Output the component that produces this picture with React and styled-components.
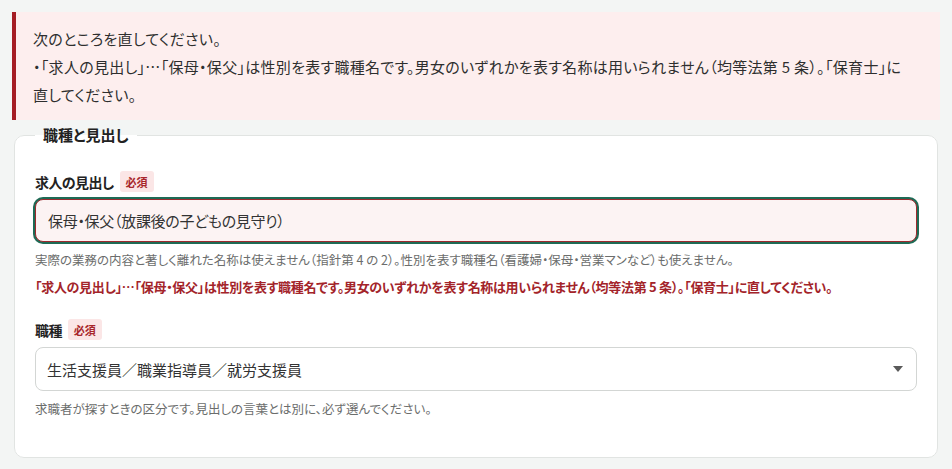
import { createGlobalStyle } from 'styled-components';
import styled from 'styled-components';

const GlobalStyle = createGlobalStyle`
  body {
    margin: 0;
    background: #f3f5f4;
    font-family: 'Noto Sans CJK JP', 'Noto Sans', sans-serif;
    font-feature-settings: 'palt';
    color: #2b2b2b;
  }
`;

const App = () => {
  return (
    <>
      <GlobalStyle />
      <Page>
        <Alert role='alert'>
          <AlertLine>次のところを直してください。</AlertLine>
          <AlertLine>
            ・「求人の見出し」…「保母・保父」は性別を表す職種名です。男女のいずれかを表す名称は用いられません（均等法第 5 条）。「保育士」に直してください。
          </AlertLine>
        </Alert>

        <Card>
          <Legend>職種と見出し</Legend>

          <Field>
            <LabelRow>
              <Label htmlFor='headline'>求人の見出し</Label>
              <Required>必須</Required>
            </LabelRow>
            <TextInput
              id='headline'
              defaultValue='保母・保父（放課後の子どもの見守り）'
              $invalid
            />
            <Hint>
              実際の業務の内容と著しく離れた名称は使えません（指針第 4 の 2）。性別を表す職種名（看護婦・保母・営業マンなど）も使えません。
            </Hint>
            <ErrorText>
              「求人の見出し」…「保母・保父」は性別を表す職種名です。男女のいずれかを表す名称は用いられません（均等法第 5 条）。「保育士」に直してください。
            </ErrorText>
          </Field>

          <Field>
            <LabelRow>
              <Label htmlFor='jobType'>職種</Label>
              <Required>必須</Required>
            </LabelRow>
            <SelectWrap>
              <Select id='jobType' defaultValue='life'>
                <option value='life'>生活支援員／職業指導員／就労支援員</option>
              </Select>
              <Caret width='10' height='6' viewBox='0 0 10 6'>
                <path d='M0 0h10L5 6z' fill='#5a5a5a' />
              </Caret>
            </SelectWrap>
            <Hint>求職者が探すときの区分です。見出しの言葉とは別に、必ず選んでください。</Hint>
          </Field>
        </Card>
      </Page>
    </>
  );
};

export default App;

const Page = styled.main`
  display: flex;
  flex-direction: column;
  padding: 12px 12px 0;
`;

const Alert = styled.div`
  padding: 13px 30px 11px 17px;
  border-left: 4px solid #a51d24;
  background: #fdeeee;
`;

const AlertLine = styled.p`
  margin: 0;
  font-size: 15px;
  line-height: 28px;
  letter-spacing: 0.3px;
  color: #2e2e2e;
`;

const Card = styled.fieldset`
  margin: 4px 2px 0;
  padding: 25px 20px 39px;
  min-width: 0;

  border: 1px solid #e1e4e2;
  border-radius: 10px;
  background: #fff;
`;

const Legend = styled.legend`
  padding: 0 8px;
  font-size: 15px;
  font-weight: 700;
  line-height: 22px;
  color: #222;
`;

const Field = styled.div`
  display: flex;
  flex-direction: column;

  & + & {
    margin-top: 23px;
  }
`;

const LabelRow = styled.div`
  display: flex;
  align-items: center;
  gap: 6px;
  margin-bottom: 7px;
`;

const Label = styled.label`
  font-size: 14px;
  font-weight: 700;
  letter-spacing: -0.6px;
  color: #222;
`;

const Required = styled.span`
  display: inline-flex;
  align-items: center;
  height: 21px;
  padding: 0 6px;

  font-size: 11px;
  font-weight: 700;
  color: #a8262b;

  border-radius: 3px;
  background: #fbe6e6;
`;

const TextInput = styled.input`
  box-sizing: border-box;
  width: 100%;
  height: 43px;
  padding: 0 12px;

  font-family: inherit;
  font-feature-settings: inherit;
  font-size: 15px;
  letter-spacing: -0.3px;
  color: #333;

  border: 1px solid ${({ $invalid }) => ($invalid ? '#9d2a2e' : '#d0d4d1')};
  border-radius: 8px;
  background: ${({ $invalid }) => ($invalid ? '#fcf3f3' : '#fff')};
  box-shadow: ${({ $invalid }) => ($invalid ? '0 0 0 2px #1e6a55' : 'none')};
  outline: none;
`;

const Hint = styled.p`
  margin: 9px 0 0;
  font-size: 12.5px;
  line-height: 18px;
  color: #6b6d6c;
`;

const ErrorText = styled.p`
  margin: 9px 0 0;
  font-size: 13px;
  font-weight: 700;
  line-height: 18px;
  letter-spacing: -0.3px;
  color: #a3242a;
`;

const SelectWrap = styled.div`
  position: relative;
`;

const Select = styled.select`
  box-sizing: border-box;
  width: 100%;
  height: 44px;
  padding: 0 40px 0 11px;

  font-family: inherit;
  font-size: 15px;
  color: #333;

  appearance: none;
  border: 1px solid #d3d6d4;
  border-radius: 8px;
  background: #fff;
  outline: none;
`;

const Caret = styled.svg`
  position: absolute;
  right: 14px;
  top: 50%;
  transform: translateY(-50%);
  pointer-events: none;
`;
